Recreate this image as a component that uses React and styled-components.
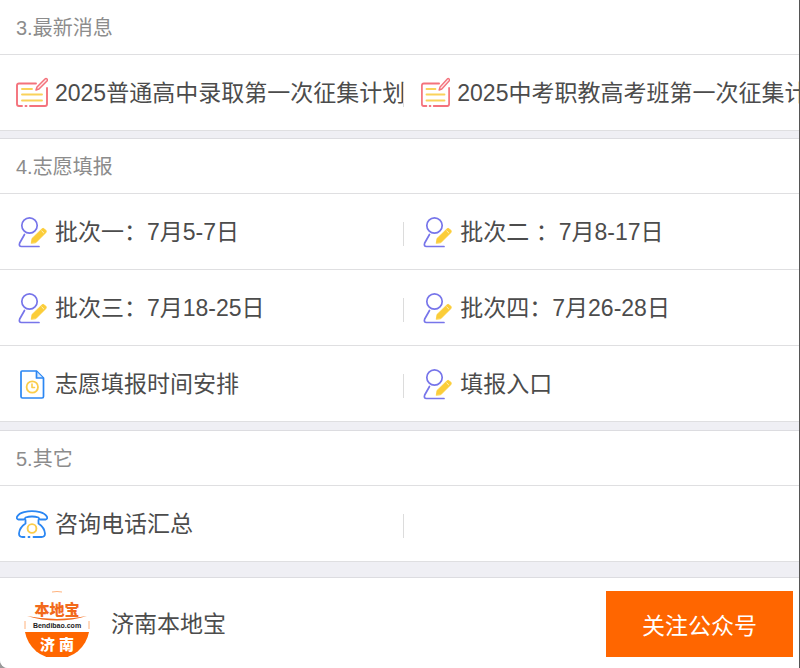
import React from 'react';
import styled, { createGlobalStyle } from 'styled-components';

const NoteIcon = () => (
    <svg viewBox="0 0 32 32" fill="none" strokeLinecap="round" strokeLinejoin="round" preserveAspectRatio="none">
        <path d="M20 6.500H3Q1 6.500 1 8.500V27Q1 29 3 29H6M9.500 29H10.500M14 29H29Q31 29 31 27V11" stroke="#f4727c" strokeWidth="1.900" />
        <path d="M6 12H16M6 17.500H18M6 17.500H26M6 23.500H26" stroke="#fad25a" strokeWidth="1.900" />
        <path d="M20 13L21 10L29 2Q30 1 31 2Q32 3 31 4L23 12Z" fill="#fde8ea" stroke="#f4727c" strokeWidth="1.500" />
    </svg>
);

const PenIcon = () => (
    <svg viewBox="0 0 32 32" fill="none" strokeLinecap="round" strokeLinejoin="round">
        <circle cx="13.500" cy="9.500" r="7.700" stroke="#7775ea" strokeWidth="1.700" />
        <path d="M8.500 18.500L3.700 27Q2.500 30.500 5.500 30.500H23" stroke="#7775ea" strokeWidth="1.700" />
        <path d="M15.300 27L16 22.500L26 12.800Q27.200 11.800 28.500 13L29.800 14.300Q30.800 15.500 29.800 16.700L20 26.500Z" fill="#fbcd38" stroke="#fbcd38" strokeWidth="0.800" />
        <path d="M25.800 15L27.600 16.800" stroke="#fff3c4" strokeWidth="1" />
    </svg>
);

const FileIcon = () => (
    <svg viewBox="0 0 32 32" fill="none" strokeLinecap="round" strokeLinejoin="round">
        <path d="M6 3H20.500L27.500 10V28.500Q27.500 30 26 30H6.500Q5 30 5 28.500V4Q5 3 6 3Z" stroke="#2b87f3" strokeWidth="1.700" />
        <path d="M20.500 3.500V10H27" fill="#d9eaff" stroke="#2b87f3" strokeWidth="1.700" />
        <circle cx="16.300" cy="19" r="5.700" stroke="#fbcd4a" strokeWidth="1.800" />
        <path d="M16 16V19.500H18.500" stroke="#fbcd4a" strokeWidth="1.600" />
    </svg>
);

const PhoneIcon = () => (
    <svg viewBox="0 0 32 32" fill="none" strokeLinecap="round" strokeLinejoin="round">
        <path d="M2.500 11.500Q0 11 1.200 8.500Q3 5.500 8 4.200Q16 2.200 24 4.200Q29 5.500 30.800 8.500Q32 11 29.500 11.500H24.500Q23 11.500 22.500 9.500Q16 7.500 9.500 9.500Q9 11.500 7.500 11.500Z" stroke="#2b87f3" strokeWidth="1.800" />
        <path d="M8.500 29H6.500Q3 29 3 25.500Q3.500 19.500 9.500 15.500V12M22.500 12V15.500Q28.500 19.500 29 25.500Q29 29 25.500 29H17.500M12.500 29H13.500" stroke="#2b87f3" strokeWidth="1.800" />
        <circle cx="16" cy="20.500" r="4.400" stroke="#fbcd4a" strokeWidth="1.900" />
    </svg>
);

const icons = { note: NoteIcon, pen: PenIcon, file: FileIcon, phone: PhoneIcon };

const sections = [
    {
        title: '3.最新消息',
        gap: 7,
        rows: [
            [
                { icon: 'note', text: '2025普通高中录取第一次征集计划' },
                { icon: 'note', text: '2025中考职教高考班第一次征集计划' },
            ],
        ],
    },
    {
        title: '4.志愿填报',
        gap: 8,
        rows: [
            [
                { icon: 'pen', text: '批次一：7月5-7日' },
                { icon: 'pen', text: '批次二 ：7月8-17日' },
            ],
            [
                { icon: 'pen', text: '批次三：7月18-25日' },
                { icon: 'pen', text: '批次四：7月26-28日' },
            ],
            [
                { icon: 'file', text: '志愿填报时间安排' },
                { icon: 'pen', text: '填报入口' },
            ],
        ],
    },
    {
        title: '5.其它',
        gap: 15,
        rows: [[{ icon: 'phone', text: '咨询电话汇总' }, null]],
    },
];

const App = () => {
    return (
        <Container>
            <GlobalStyle />
            {sections.map((section) => (
                <Section key={section.title} $gap={section.gap}>
                    <SectionTitle>{section.title}</SectionTitle>
                    {section.rows.map((row, i) => (
                        <Row key={i}>
                            {row.map((item, j) => {
                                const Icon = item && icons[item.icon];
                                return (
                                    <Cell key={j}>
                                        {item && (
                                            <ItemLink href="#">
                                                <IconBox $narrow={item.icon === 'note' && j === 1}>
                                                    <Icon />
                                                </IconBox>
                                                <ItemText>{item.text}</ItemText>
                                            </ItemLink>
                                        )}
                                    </Cell>
                                );
                            })}
                        </Row>
                    ))}
                </Section>
            ))}
            <Footer>
                <Logo viewBox="0 0 66 66">
                    <circle cx="33" cy="33" r="32" fill="#fff" />
                    <path d="M1 41H65A32.500 32.500 0 0 1 1 41Z" fill="#ff6600" />
                    <path d="M28 1Q33 0 38 1" fill="none" stroke="#ffb27d" />
                    <path d="M3 25Q33 31 63 25Q33 34 3 25Z" fill="#f26a1b" />
                    <path d="M1 30V38M65 30V38" stroke="#ffb27d" />
                    <LogoText x="33" y="24" $size={15} $color="#f26a1b">本地宝</LogoText>
                    <LogoText x="33" y="37" $size={7} $color="#222">Bendibao.com</LogoText>
                    <LogoText x="33" y="59" $size={15} $color="#fff">济 南</LogoText>
                </Logo>
                <AccountName>济南本地宝</AccountName>
                <FollowButton type="button">关注公众号</FollowButton>
            </Footer>
        </Container>
    );
};

export default App;

const GlobalStyle = createGlobalStyle`
    * {
        box-sizing: border-box;
    }
    body {
        margin: 0;
        background-color: #999;
        font-family: 'Liberation Sans', 'Noto Sans CJK SC', sans-serif;
    }
`;

const Container = styled.div`
    overflow: hidden;
    border-right: 1px solid #555;
    border-bottom-left-radius: 8px;
    background-color: #efeff4;
`;

const Section = styled.section`
    margin-bottom: ${({ $gap }) => $gap}px;
    background-color: #fff;
    border-top: 1px solid #dcdce0;
    &:first-of-type {
        border-top: none;
    }
`;

const SectionTitle = styled.h2`
    margin: 0;
    padding: 2px 16px 0;
    border-bottom: 1px solid #dfdfe1;
    font-size: 20px;
    font-weight: 400;
    line-height: 52px;
    color: #8c8c8c;
`;

const Row = styled.div`
    display: grid;
    grid-template-columns: 50.6% minmax(0, 1fr);
    border-bottom: 1px solid #dfdfe1;
`;

const Cell = styled.div`
    position: relative;
    display: flex;
    align-items: center;
    height: 75px;
    padding-left: 16px;
    overflow: hidden;
    &:first-child::after {
        content: '';
        position: absolute;
        right: 0;
        top: 28px;
        width: 1px;
        height: 24px;
        background-color: #dcdcdc;
    }
    & + & {
        padding-left: 17px;
    }
`;

const ItemLink = styled.a`
    display: flex;
    align-items: center;
    color: #4c4c4c;
    text-decoration: none;
`;

const IconBox = styled.span`
    flex: none;
    width: ${({ $narrow }) => ($narrow ? 29 : 32)}px;
    height: 32px;
    margin-right: 7px;
    svg {
        display: block;
        width: 100%;
        height: 100%;
    }
`;

const ItemText = styled.span`
    font-size: 23px;
    font-weight: 400;
    line-height: 32px;
    white-space: nowrap;
`;

const Footer = styled.footer`
    display: flex;
    align-items: center;
    padding: 13px 6px 11px 24px;
    border-top: 1px solid #dcdce0;
    background-color: #fff;
`;

const Logo = styled.svg`
    flex: none;
    width: 66px;
    height: 66px;
    margin-right: 21px;
`;

const LogoText = styled.text`
    font-size: ${({ $size }) => $size}px;
    font-weight: 900;
    fill: ${({ $color }) => $color};
    text-anchor: middle;
`;

const AccountName = styled.span`
    flex: 1;
    padding-bottom: 4px;
    font-size: 23px;
    color: #4c4c4c;
`;

const FollowButton = styled.button`
    height: 66px;
    padding: 0 36px;
    border: none;
    background-color: #ff6600;
    color: #fff;
    font-family: inherit;
    font-size: 23px;
    cursor: pointer;
`;
